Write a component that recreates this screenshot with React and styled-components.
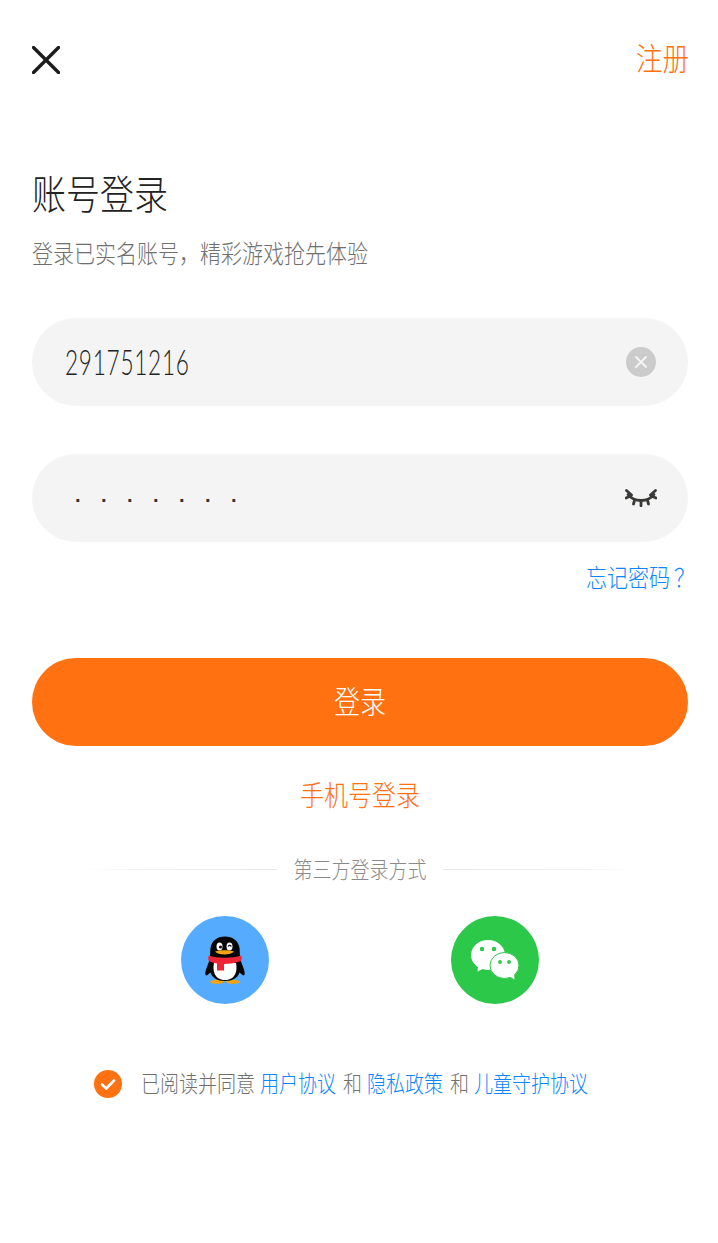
import React from 'react';
import styled, { createGlobalStyle, css } from 'styled-components';

const cjk = '"Noto Sans CJK SC", "Noto Sans", sans-serif';

// the reference font is narrower than Noto, so the glyphs get stretched a bit
const tall = css`
  transform: scaleY(1.17);
`;

const GlobalStyle = createGlobalStyle`
  html, body {
    margin: 0;
    padding: 0;
    background: #fff;
  }
  body {
    font-family: ${cjk};
    font-weight: 300;
  }
`;

const Page = styled.div`
  width: 718px;
  height: 1243px;
  box-sizing: border-box;
  padding: 40px 30px 0 32px;
  overflow: hidden;
`;

const TopBar = styled.header`
  height: 40px;
  display: flex;
  justify-content: space-between;
  align-items: center;
`;

const CloseButton = styled.button`
  width: 28px;
  height: 28px;
  padding: 0;
  border: 0;
  background: none;
  display: flex;
`;

const RegisterLink = styled.a`
  width: 53px;
  margin: 0 -1px 6px 0;
  font-size: 26.5px;
  line-height: 40px;
  color: #ff7111;
  white-space: nowrap;
  ${tall}
`;

const Title = styled.h1`
  margin: 88px 0 0;
  font-size: 34px;
  line-height: 50px;
  font-weight: 300;
  color: #222;
  ${tall}
  transform-origin: left center;
`;

const Subtitle = styled.p`
  margin: 19px 0 0;
  font-size: 21px;
  line-height: 30px;
  color: #6f6f6f;
  ${tall}
  transform-origin: left center;
`;

const Field = styled.div`
  width: 656px;
  height: 88px;
  margin-top: ${(p) => p.$top}px;
  box-sizing: border-box;
  padding: 0 32px 0 33px;
  border-radius: 44px;
  background: #f4f4f4;
  display: flex;
  align-items: center;
  justify-content: space-between;
`;

const AccountValue = styled.span`
  display: inline-block;
  padding-bottom: 2px;
  font-family: Lato, sans-serif;
  font-weight: 300;
  font-size: 34px;
  line-height: 44px;
  letter-spacing: 1.1px;
  color: #222;
  transform: scale(0.665, 1.06);
  transform-origin: left center;
`;

const PasswordValue = styled.span`
  padding-top: 4px;
  margin-left: 10px;
  font-family: "Liberation Sans", sans-serif;
  font-size: 20px;
  font-weight: 700;
  line-height: 44px;
  letter-spacing: 19.34px;
  color: #333;
`;

const ClearButton = styled.button`
  width: 30px;
  height: 30px;
  padding: 0;
  border: 0;
  border-radius: 50%;
  background: #cbcbcb;
  display: flex;
  align-items: center;
  justify-content: center;
`;

const EyeButton = styled.button`
  width: 32px;
  height: 18px;
  padding: 0;
  border: 0;
  margin-right: -1px;
  background: none;
  display: flex;
`;

const ForgotRow = styled.div`
  margin: 19px -7px 0 0;
  text-align: right;
  font-size: 21px;
  line-height: 30px;
  color: #0a84ff;
  ${tall}
`;

const ForgotMark = styled.span`
  margin-left: 4px;
`;

const LoginButton = styled.button`
  display: block;
  width: 656px;
  height: 88px;
  margin-top: 67px;
  padding: 0 0 6px;
  border: 0;
  border-radius: 44px;
  background: #ff7111;
  color: #fff;
  font-family: ${cjk};
  font-weight: 300;
  font-size: 26px;
`;

const LoginLabel = styled.span`
  display: inline-block;
  ${tall}
`;

const PhoneLogin = styled.div`
  width: 656px;
  margin-top: 30px;
  text-align: center;
  font-size: 24px;
  line-height: 36px;
  color: #ff7111;
  ${tall}
`;

const DividerRow = styled.div`
  width: 656px;
  margin-top: 43px;
  display: flex;
  align-items: center;
  justify-content: center;
  gap: 16px;
  font-size: 19px;
  line-height: 28px;
  color: #8a8a8a;
`;

const DividerLabel = styled.span`
  display: inline-block;
  ${tall}
`;

const DividerLine = styled.span`
  width: 194px;
  height: 1px;
  background: linear-gradient(${(p) => (p.$flip ? 'to left' : 'to right')}, #fff, #f2f2f2 25%, #e8e8e8);
`;

const SocialRow = styled.div`
  width: 656px;
  margin-top: 33px;
  display: flex;
  justify-content: center;
  gap: 182px;
`;

const SocialCircle = styled.div`
  width: 88px;
  height: 88px;
  border-radius: 50%;
  background: ${(p) => p.$color};
  display: flex;
  align-items: center;
  justify-content: center;
`;

const Agreement = styled.div`
  margin-top: 65px;
  padding-left: 62px;
  display: flex;
  align-items: center;
  font-size: 19px;
  line-height: 28px;
  color: #6f6f6f;
  white-space: nowrap;
`;

const CheckBadge = styled.span`
  width: 28px;
  height: 28px;
  margin-right: 19px;
  border-radius: 50%;
  background: #ff7111;
  display: flex;
  align-items: center;
  justify-content: center;
`;

const Plain = styled.span`
  display: inline-block;
  padding-bottom: 2px;
  margin: 0 ${(p) => p.$right || 0}px 0 ${(p) => p.$left || 0}px;
  ${tall}
`;

const Policy = styled.a`
  display: inline-block;
  padding-bottom: 2px;
  margin-left: ${(p) => p.$lead || 0}px;
  color: #0a84ff;
  ${tall}
`;

const CloseIcon = () => (
  <svg width="28" height="28" viewBox="0 0 28 28">
    <path d="M1.500 1.500 26.500 26.500M26.500 1.500 1.500 26.500" stroke="#1c1c1c" strokeWidth="3.400" strokeLinecap="round" />
  </svg>
);

const ClearIcon = () => (
  <svg width="14" height="14" viewBox="0 0 14 14">
    <path d="M2 2 12 12M12 2 2 12" stroke="#f4f4f4" strokeWidth="2" strokeLinecap="round" />
  </svg>
);

const EyeIcon = () => (
  <svg width="32" height="18" viewBox="0 0 32 18" fill="none" stroke="#3a3a38" strokeWidth="2.800" strokeLinecap="round">
    <path d="M3 5.500C9 13.500 23 13.500 29 5.500" />
    <path d="M1.500 1.500 6.500 6M30.500 1.500 25.500 6M1 9 5.500 7M31 9 26.500 7M9.500 11.500 8.500 15M22.500 11.500 23.500 15M16 12.500V16.800" />
  </svg>
);

const CheckIcon = () => (
  <svg width="16" height="13" viewBox="0 0 16 13">
    <path d="M2 6.500 6.200 10.500 14 2.500" fill="none" stroke="#fff" strokeWidth="2.600" strokeLinecap="round" strokeLinejoin="round" />
  </svg>
);

const PenguinIcon = () => (
  <svg width="40" height="48" viewBox="0 0 40 48">
    <ellipse cx="12" cy="45.800" rx="7" ry="2" fill="#f5a30f" />
    <ellipse cx="28" cy="45.800" rx="7" ry="2" fill="#f5a30f" />
    <path d="M20 0.500C12 0.500 6.500 5 5.500 12 5 16 5.500 19 4.500 24 3 29 .5 33 .3 37c0 2.500 1 3 2.200 2l3-2.500C7.500 42 12 45 20 45s12.500-3 14.500-8.500l3 2.500c1.200 1 2.200.5 2.200-2-.2-4-2.700-8-4.200-13-1-5-.5-8-1-12C33.500 5 28 .5 20 .5Z" fill="#050505" />
    <path d="M9 27c-1.500 7 0 17 11 17s12.500-10 11-17Z" fill="#fff" />
    <ellipse cx="14.500" cy="10.500" rx="3" ry="4" fill="#fff" />
    <ellipse cx="24.500" cy="10.500" rx="3" ry="4" fill="#fff" />
    <circle cx="15.500" cy="11" r="1.600" fill="#111" />
    <path d="M23 10.500c1-1.500 2.600-1.500 3.400 0" fill="none" stroke="#111" strokeWidth="1.200" />
    <path d="M10 15.500c5-1.800 14-1.800 19 0-3 4-16 4-19 0Z" fill="#f5a30f" />
    <path d="M4 19.500c8 3 24 3 32 0 1 1.700 1 3.800 0 5.500-5 2-11 2.800-17 3v6.500h-7V27.500C8.500 27 6 26 3.800 25c-.8-1.800-.8-3.700.2-5.500Z" fill="#ee2536" />
  </svg>
);

const WeChatIcon = () => (
  <svg width="48" height="40" viewBox="0 0 48 40">
    <path d="M7 25.500 6.500 31.500 13 28.500Z" fill="#fff" />
    <ellipse cx="17" cy="15" rx="17" ry="15" fill="#fff" />
    <circle cx="11" cy="9" r="2.200" fill="#2cc84a" />
    <circle cx="23" cy="9" r="2.200" fill="#2cc84a" />
    <ellipse cx="33.500" cy="25.500" rx="14.500" ry="13" fill="#fff" stroke="#2cc84a" strokeWidth="1" />
    <path d="M38 36 43.500 39.500 43 33Z" fill="#fff" />
    <circle cx="29" cy="22" r="1.900" fill="#2cc84a" />
    <circle cx="38" cy="22" r="1.900" fill="#2cc84a" />
  </svg>
);

const App = () => {
  return (
    <Page>
      <GlobalStyle />
      <TopBar>
        <CloseButton aria-label="close">
          <CloseIcon />
        </CloseButton>
        <RegisterLink>注册</RegisterLink>
      </TopBar>

      <Title>账号登录</Title>
      <Subtitle>{'登录已实名账号\uFF0C精彩游戏抢先体验'}</Subtitle>

      <Field $top={51}>
        <AccountValue>291751216</AccountValue>
        <ClearButton aria-label="clear">
          <ClearIcon />
        </ClearButton>
      </Field>

      <Field $top={48}>
        <PasswordValue>·······</PasswordValue>
        <EyeButton aria-label="toggle password">
          <EyeIcon />
        </EyeButton>
      </Field>

      <ForgotRow>
        忘记密码<ForgotMark>{'\uFF1F'}</ForgotMark>
      </ForgotRow>
      <LoginButton>
        <LoginLabel>登录</LoginLabel>
      </LoginButton>
      <PhoneLogin>手机号登录</PhoneLogin>

      <DividerRow>
        <DividerLine />
        <DividerLabel>第三方登录方式</DividerLabel>
        <DividerLine $flip />
      </DividerRow>

      <SocialRow>
        <SocialCircle $color="#55acff">
          <PenguinIcon />
        </SocialCircle>
        <SocialCircle $color="#2cc84a">
          <WeChatIcon />
        </SocialCircle>
      </SocialRow>

      <Agreement>
        <CheckBadge>
          <CheckIcon />
        </CheckBadge>
        <Plain>已阅读并同意</Plain>
        <Policy $lead={5}>用户协议</Policy>
        <Plain $left={7} $right={5}>和</Plain>
        <Policy>隐私政策</Policy>
        <Plain $left={7} $right={5}>和</Plain>
        <Policy>儿童守护协议</Policy>
      </Agreement>
    </Page>
  );
};

export default App;
